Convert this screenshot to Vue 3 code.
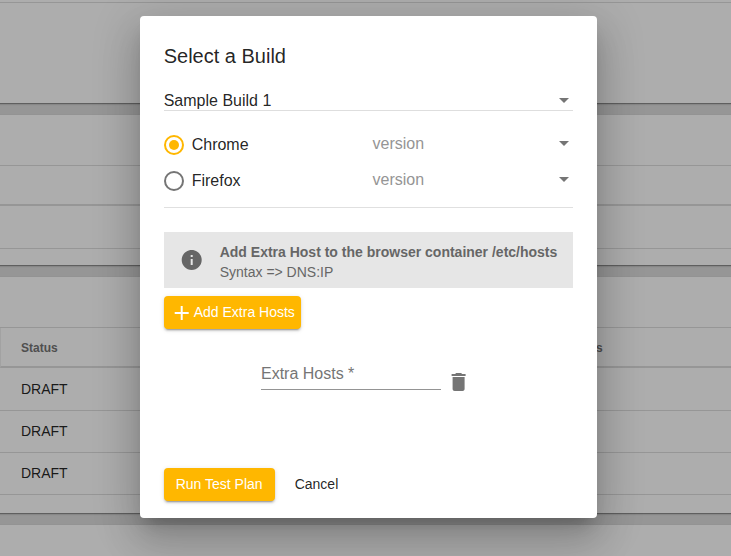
<script setup>
import { ref } from 'vue'

const browsers = ['Chrome', 'Firefox']
const selected = ref('Chrome')
const rows = ['DRAFT', 'DRAFT', 'DRAFT']
</script>

<template>
  <div class="page">
    <main class="cards">
      <section class="card summary"><div class="toolbar"></div></section>
      <section class="card builds">
        <div class="title"></div>
        <div class="head"></div>
        <div class="row"></div>
      </section>
      <section class="card runs">
        <div class="title"></div>
        <div class="head"><span>Status</span><span class="results">Results</span></div>
        <div v-for="(status, i) in rows" :key="i" class="row">{{ status }}</div>
      </section>
      <section class="card next"></section>
    </main>

    <div class="overlay">
      <div class="dialog" role="dialog">
        <h1>Select a Build</h1>
        <div class="select build"><span>Sample Build 1</span><i class="arrow"></i></div>
        <div class="browsers">
          <div v-for="name in browsers" :key="name" class="browser">
            <div class="choice" @click="selected = name">
              <span class="radio" :class="{ on: selected === name }"></span>
              <span>{{ name }}</span>
            </div>
            <div class="select version"><span>version</span><i class="arrow"></i></div>
          </div>
        </div>
        <div class="info">
          <svg width="24" height="24" viewBox="0.3 0 24 24"><path d="M12 2C6.48 2 2 6.48 2 12s4.48 10 10 10 10-4.48 10-10S17.52 2 12 2zm1 15h-2v-6h2v6zm0-8h-2V7h2v2z" /></svg>
          <div><b>Add Extra Host to the browser container /etc/hosts</b><br>Syntax =&gt; DNS:IP</div>
        </div>
        <button class="button add">
          <svg width="24" height="24" viewBox="0.3 0 24 24"><path d="M19 13h-6v6h-2v-6H5v-2h6V5h2v6h6v2z" /></svg>
          <span>Add Extra Hosts</span>
        </button>
        <div class="hosts">
          <div class="field">Extra Hosts *</div>
          <svg width="24" height="24" viewBox="0.4 0 24 24"><path d="M6 19c0 1.100.9 2 2 2h8c1.100 0 2-.9 2-2V7H6v12zM19 4h-3.500l-1-1h-5l-1 1H5v2h14V4z" /></svg>
        </div>
        <div class="actions">
          <button class="button run">Run Test Plan</button>
          <button class="cancel">Cancel</button>
        </div>
      </div>
    </div>
  </div>
</template>

<style>
body { overflow: hidden; }
</style>

<style scoped>
* { box-sizing: border-box; }
.page {
  position: relative;
  height: 556px;
  overflow: hidden;
  background: #dedede;
  color: rgba(0, 0, 0, 0.87);
  font-family: "Liberation Sans", Arial, sans-serif;
  font-size: 14px;
}
.cards { display: flex; flex-direction: column; gap: 12px; margin: 0 -10px; }
.card {
  flex: none;
  padding: 0 10px;
  background: #fff;
  box-shadow: 0 2px 1px -1px rgba(0, 0, 0, 0.2), 0 1px 1px rgba(0, 0, 0, 0.14), 0 1px 3px rgba(0, 0, 0, 0.12);
}
.summary { height: 103px; }
.toolbar { height: 3px; border-bottom: 1px solid #dedede; }
.builds { height: 150px; }
.builds .title { height: 51px; border-bottom: 1px solid #dedede; }
.builds .head { height: 40px; border-bottom: 2px solid #dedede; }
.builds .row { height: 43px; }
.runs { height: 236px; }
.runs .title { height: 51px; border-bottom: 1px solid #dedede; }
.runs .head {
  display: flex;
  align-items: center;
  height: 40px;
  padding: 2px 0 0 20px;
  border-bottom: 2px solid #dedede;
  border-left: 1px solid #efefef;
  color: #757575;
  font-size: 12px;
  font-weight: 700;
}
.results { width: 100px; margin-left: 445px; text-align: right; }
.row {
  height: 42px;
  padding-left: 21px;
  border-bottom: 1px solid #dedede;
  line-height: 40px;
}
.runs .head + .row { height: 43px; line-height: 42px; }
.next { height: 60px; }

.overlay {
  position: absolute;
  inset: 0;
  display: flex;
  align-items: flex-start;
  justify-content: center;
  padding: 16px 134px 0 140px;
  background: rgba(0, 0, 0, 0.32);
}
.dialog {
  width: 457px;
  height: 502px;
  padding: 24px 24.300px 24px 23.700px;
  border-radius: 4px;
  background: #fff;
  box-shadow: 0 11px 15px -7px rgba(0, 0, 0, 0.2), 0 24px 38px 3px rgba(0, 0, 0, 0.14), 0 9px 46px 8px rgba(0, 0, 0, 0.12);
}
h1 { margin: 0; font-size: 20px; font-weight: 400; line-height: 32px; }
.select { display: flex; align-items: center; justify-content: space-between; font-size: 16px; }
.arrow {
  margin-right: 4px;
  border: 5px solid transparent;
  border-top-color: #757575;
  border-bottom: 0;
}
.build { height: 23px; margin-top: 16px; padding-top: 4px; border-bottom: 1px solid #dedede; }
.build .arrow { margin-bottom: 2px; }
.browsers { height: 97px; padding-top: 16px; border-bottom: 1px solid #e0e0e0; }
.browser { display: flex; height: 36px; align-items: center; }
.choice { display: flex; align-items: center; gap: 8px; width: 208.800px; font-size: 16px; }
.radio {
  display: flex;
  align-items: center;
  justify-content: center;
  width: 20px;
  height: 20px;
  border: 2px solid #757575;
  border-radius: 50%;
}
.radio.on { border-color: #ffb700; }
.radio.on::after { content: ""; width: 10px; height: 10px; border-radius: 50%; background: #ffb700; }
.version { flex: 1; height: 34px; padding-bottom: 2px; color: #959595; }
.version .arrow { margin-bottom: 2px; }
.info {
  display: flex;
  align-items: center;
  gap: 16px;
  height: 56px;
  margin-top: 24px;
  padding-left: 16px;
  background: #e6e6e6;
  color: #666;
  line-height: 20px;
  white-space: nowrap;
}
.info div { padding-top: 4px; }
svg { display: block; flex: none; fill: currentColor; }
button { border: 0; background: none; color: inherit; font: inherit; line-height: 33px; padding: 0; }
.button {
  display: flex;
  align-items: center;
  height: 33px;
  border-radius: 4px;
  background: #ffb700;
  color: #fff;
  white-space: nowrap;
  box-shadow: 0 3px 1px -2px rgba(0, 0, 0, 0.2), 0 2px 2px rgba(0, 0, 0, 0.14), 0 1px 5px rgba(0, 0, 0, 0.12);
}
.add { width: 137px; margin-top: 8px; padding-left: 6px; }
.hosts { display: flex; width: 210px; height: 73px; margin: 31px 0 0 97.300px; gap: 5.600px; color: #757575; }
.field { width: 180px; height: 30px; border-bottom: 1px solid #949494; font-size: 16px; line-height: 27px; }
.hosts svg { margin-top: 10px; }
.actions { display: flex; gap: 20px; margin-top: 35px; }
.run { width: 111px; padding-left: 12px; }
</style>
